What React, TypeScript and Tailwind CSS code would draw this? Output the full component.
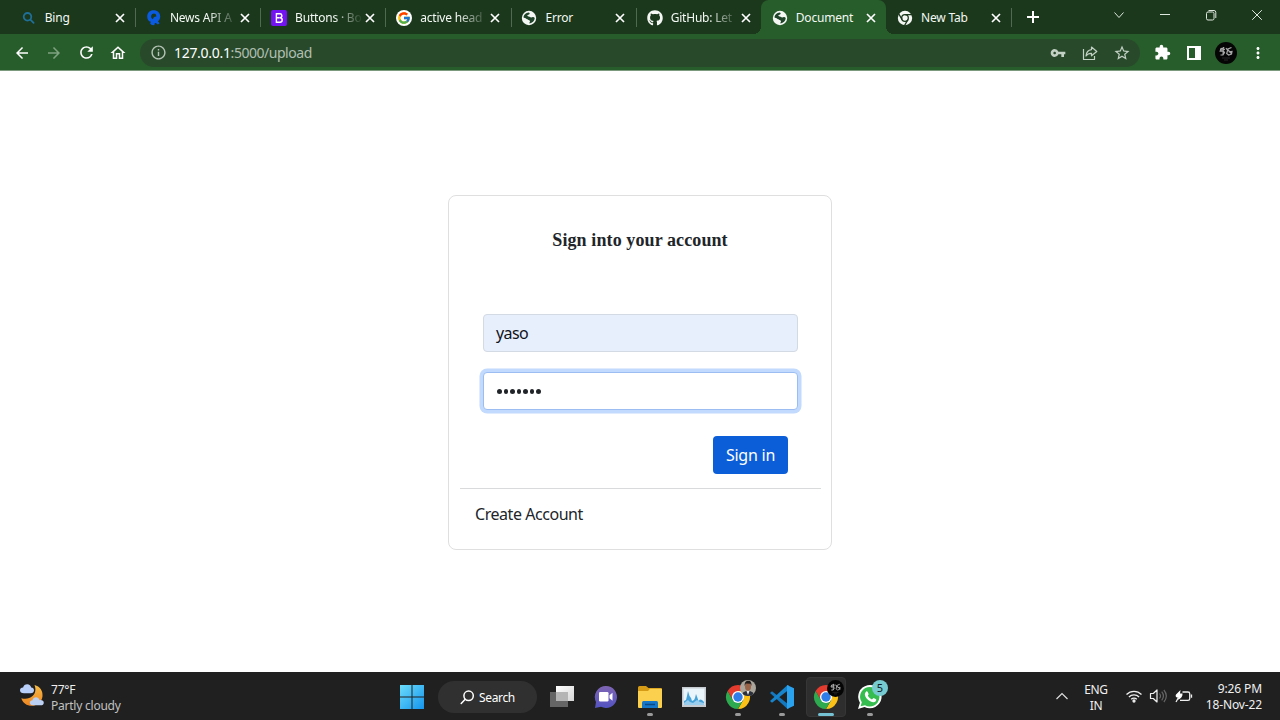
import type { ReactNode } from "react";
import {
  MdArrowBack,
  MdArrowForward,
  MdRefresh,
  MdOutlineHome,
  MdInfoOutline,
  MdVpnKey,
  MdStarBorder,
  MdExtension,
  MdMoreVert,
} from "react-icons/md";
import { FcGoogle } from "react-icons/fc";
import { FaGithub } from "react-icons/fa";
import clsx from "clsx";

function GlobeIcon() {
  return (
    <svg width="16" height="16" viewBox="0 0 16 16">
      <circle cx="8" cy="8" r="7.2" fill="#f4f7f4" />
      <path
        d="M7.600 2.400c1 .2 1.300.8.9 1.500-.5.7-1.700.6-2.100 1.400-.3.8.6 1.300 1.500 1.300 1 0 1.200.9 2.100 1 .9.1 1.300-.7 2.200-.5.9.1 1.600.7 1.500 1.500-.3 2.500-2.400 4.500-5 4.900-.5-.4-.2-1.300.2-1.800.4-.7-.3-1.500-1.200-1.700-1-.3-.8-1.400-1.700-1.600C4.600 8.200 3 7.600 2.500 7.400 2.700 4.700 5 2.500 7.600 2.400Z"
        fill="#21452a"
      />
      <path d="M4 5.300l3 1.500 2.800 1.200-1 1.600-2.800-.4L3.400 7z" fill="#21452a" />
    </svg>
  );
}

function BingSearchIcon() {
  return (
    <svg width="14" height="14" viewBox="0 0 14 14" fill="none" stroke="#1f6f98" strokeWidth="1.800" strokeLinecap="round">
      <circle cx="5.500" cy="5.800" r="3.800" />
      <path d="M8.400 8.600l3.200 3.300" />
    </svg>
  );
}

function NewsIcon() {
  return (
    <svg width="16" height="18" viewBox="0 0 16 18">
      <path
        d="M7.500 1.200c4 0 6.700 2.700 6.700 6.300 0 2.100-.8 3.700-2.300 4.800l1.700 2-1.700 1.100-2-1.500-1 .1-.6 2.300-2.500-.2-1.700-1.600.7-1.700C2.500 12.300 1.200 10.200 1.200 7.500c0-3.600 2.600-6.300 6.300-6.300z"
        fill="#0b5be0"
      />
      <path d="M7.800 4.600a2.900 2.900 0 0 0-.9 5.600c.4-1.700 1.200-2.700 3.400-2.800a2.700 2.700 0 0 0-2.500-2.800z" fill="#1b381c" />
    </svg>
  );
}

function BootstrapIcon() {
  return (
    <svg width="16" height="16" viewBox="0 0 16 16">
      <rect width="16" height="16" rx="2" fill="#7413f2" />
      <path
        d="M5.400 3.700h3.200a2 2 0 0 1 .5 4 2.250 2.250 0 0 1-.3 4.500H5.400zM5.600 7.700h3.200"
        fill="none"
        stroke="#fff"
        strokeWidth="1.400"
      />
    </svg>
  );
}

function MonoChromeIcon() {
  return (
    <svg width="16" height="16" viewBox="0 0 16 16">
      <circle cx="8" cy="8" r="7.200" fill="#f4f7f4" />
      <g fill="none" stroke="#1b381c" strokeWidth="1.300">
        <circle cx="8" cy="8" r="3.300" />
        <path d="M8 4.700h7M5.100 9.650L1.700 3.700M10.900 9.650l-3.500 6.100" />
      </g>
    </svg>
  );
}

function TabGoogleIcon() {
  return (
    <span className="flex size-4 items-center justify-center rounded-full bg-white">
      <FcGoogle size={14} />
    </span>
  );
}

type TabProps = { title: string; icon: ReactNode; active?: boolean; divider?: boolean };

function Tab({ title, icon, active, divider }: TabProps) {
  return (
    <div
      className={clsx(
        "relative flex h-[34px] w-[125.200px] shrink-0 items-center pt-px pl-[10.800px]",
        active && "rounded-t-lg bg-[#275d2b]",
      )}
    >
      {active && (
        <>
          <span className="absolute bottom-0 -left-2 size-2 bg-[radial-gradient(circle_at_0_0,transparent_8px,#275d2b_8px)]" />
          <span className="absolute -right-2 bottom-0 size-2 bg-[radial-gradient(circle_at_100%_0,transparent_8px,#275d2b_8px)]" />
        </>
      )}
      <span className="flex w-4 shrink-0 justify-center">{icon}</span>
      <span
        className={clsx(
          "ml-2 w-[66px] pt-px text-[12px] leading-4 tracking-[-0.200px] whitespace-nowrap text-[#f4f8f4]",
          title.length > 8 && "[mask-image:linear-gradient(to_right,black_38px,transparent_68px)]",
        )}
      >
        {title}
      </span>
      <svg
        width="10"
        height="10"
        viewBox="0 0 10 10"
        className="ml-[4px] shrink-0"
        fill="none"
        stroke="#fff"
        strokeWidth="1.700"
      >
        <path d="M1 1l8 8M9 1L1 9" />
      </svg>
      {divider && <span className="absolute top-2 right-[-1px] h-[19px] w-px bg-[#4f6a50]" />}
    </div>
  );
}

function TabStrip() {
  return (
    <div className="flex h-[34px] bg-[#1b381c] pl-[9.900px]">
      <Tab title="Bing" icon={<BingSearchIcon />} divider />
      <Tab title="News API A" icon={<NewsIcon />} divider />
      <Tab title="Buttons · Bo" icon={<BootstrapIcon />} divider />
      <Tab title="active head" icon={<TabGoogleIcon />} divider />
      <Tab title="Error" icon={<GlobeIcon />} divider />
      <Tab title="GitHub: Let" icon={<FaGithub size={16} color="#f4f7f4" />} />
      <Tab title="Document" icon={<GlobeIcon />} active />
      <Tab title="New Tab" icon={<MonoChromeIcon />} divider />
      <div className="flex w-[43px] items-center justify-center">
        <svg width="12" height="12" viewBox="0 0 12 12" stroke="#fff" strokeWidth="2">
          <path d="M0 6h12M6 0v12" />
        </svg>
      </div>
      <div className="ml-auto flex h-[30px] text-[#dfe8df]">
        <WindowButton>
          <path d="M1.500 3.500l4.500 5 4.500-5" />
        </WindowButton>
        <WindowButton>
          <path d="M1 5.500h10" />
        </WindowButton>
        <WindowButton>
          <rect x="1.500" y="3" width="7.500" height="8" rx="1.500" />
          <path d="M3.500 1.500H9a1.800 1.800 0 0 1 1.800 1.800V9" />
        </WindowButton>
        <WindowButton>
          <path d="M1.200 1.200l9.600 9.600M10.800 1.200l-9.600 9.600" />
        </WindowButton>
      </div>
    </div>
  );
}

function WindowButton({ children }: { children: ReactNode }) {
  return (
    <span className="flex w-[46px] items-center justify-center">
      <svg width="12" height="12" viewBox="0 0 12 12" fill="none" stroke="currentColor" strokeWidth="1">
        {children}
      </svg>
    </span>
  );
}

function Slot({ children }: { children: ReactNode }) {
  return <span className="flex h-full w-8 shrink-0 items-center justify-center">{children}</span>;
}

function ProfileMark({ className }: { className: string }) {
  return (
    <svg viewBox="0 0 22 22" className={className}>
      <circle cx="11" cy="11" r="11" fill="#050505" />
      <g fill="none" stroke="#a8a8a8" strokeWidth="1.200">
        <path d="M9.500 6L6 6.500l-.8 2.700 3.300-.2 1 1.500-1.500 2.500-2.500 0M8.500 5l-.5 8M5 8l5-.5" />
        <path d="M16.500 5.500l-3.500 1.500-1.300 4.500 2 1.500 2.800-1 .5-2.500-3.300.3M12 7l5 5M11 6l2 3" />
      </g>
      <path d="M7 16h8M9 18h4" stroke="#333" strokeWidth=".8" />
    </svg>
  );
}

function Toolbar() {
  return (
    <div className="flex h-[37px] items-center border-b border-[#7c9b7e] bg-[#275d2b] px-[6px] pt-px text-white">
      <Slot><MdArrowBack size={18} /></Slot>
      <Slot><MdArrowForward size={18} className="text-[#7fa381]" /></Slot>
      <Slot><MdRefresh size={19} /></Slot>
      <Slot><MdOutlineHome size={18} /></Slot>
      <div className="ml-[6px] flex h-7 w-[1000px] items-center rounded-full bg-[#284a2b] pr-[2px] pl-[10px]">
        <MdInfoOutline size={17} className="text-[#b5c4b6]" />
        <span className="ml-[7px] text-[14px] leading-5 tracking-[-0.470px] text-[#b0bfb1]">
          <span className="tracking-[-0.300px] text-white">127.0.0.1</span>:5000/upload
        </span>
        <div className="ml-auto flex h-full text-[#c3d0c4]">
          <Slot><MdVpnKey size={16} /></Slot>
          <Slot>
            <svg width="16" height="16" viewBox="0 0 16 16" fill="none" stroke="currentColor" strokeWidth="1.200" strokeLinejoin="round">
              <path d="M1.500 4v10.500h11V11" />
              <path d="M9.500 2l5.300 4.500-5.300 4.300V8.300C7 8.200 5.300 9 4 11c.3-3.600 2.200-6 5.500-6.400z" />
            </svg>
          </Slot>
          <Slot><MdStarBorder size={18} /></Slot>
        </div>
      </div>
      <div className="ml-[6px] flex h-full">
        <Slot><MdExtension size={17} /></Slot>
        <Slot>
          <svg width="14" height="14" viewBox="0 0 14 14">
            <path d="M1 1h12v12H1z" fill="none" stroke="#fff" strokeWidth="2" />
            <path d="M8 1h5v12H8z" fill="#fff" />
          </svg>
        </Slot>
        <Slot><ProfileMark className="size-[22px] shrink-0" /></Slot>
        <Slot><MdMoreVert size={18} /></Slot>
      </div>
    </div>
  );
}

function SignInCard() {
  return (
    <form className="flex h-[355px] w-96 flex-col rounded-lg border border-[#dfdfdf] bg-white pr-[10px] pl-[11px] text-[16px] text-[#212529]">
      <h1 className="mt-[32px] pr-px text-center font-['Liberation_Serif',serif] text-[18px] leading-6 font-bold tracking-[0.100px]">
        Sign into your account
      </h1>
      <div className="mt-[62px] flex flex-col gap-5 px-[23px]">
        <div className="flex h-[38px] items-center rounded border border-[#d3dae3] bg-[#e8effc] px-3 pt-px text-[#10131a]">
          <span className="tracking-[-0.600px]">yaso</span>
        </div>
        <div className="flex h-[38px] items-center gap-[2px] rounded border border-[#9bbdf2] bg-white px-[13px] ring-[3.500px] ring-[#c2dafd]">
          {Array.from({ length: 7 }, (_, i) => (
            <span key={i} className="mt-[2px] size-[4.500px] shrink-0 rounded-full bg-[#212529]" />
          ))}
        </div>
      </div>
      <span className="mt-[26px] mr-[33px] flex h-[38px] w-[75px] items-center justify-center self-end rounded bg-[#0b5ed7] pt-px tracking-[-0.250px] text-white">
        Sign in
      </span>
      <hr className="mt-[14px] border-[#d9dadb]" />
      <span className="mt-[13px] ml-[15px] tracking-[-0.450px]">Create Account</span>
    </form>
  );
}

function ChromeIcon() {
  return (
    <svg width="26" height="26" viewBox="0 0 26 26">
      <path d="M23.400 7H13l5.200 9L13 25A12 12 0 0 0 23.400 7z" fill="#fbc116" />
      <path d="M2.600 7A12 12 0 0 1 23.400 7H13l-5.200 9z" fill="#e33b2e" />
      <path d="M2.600 7l5.200 9 5.200 3 5.200-3L13 25A12 12 0 0 1 2.600 7z" fill="#2da94f" />
      <circle cx="13" cy="13" r="6" fill="#fff" />
      <circle cx="13" cy="13" r="4.700" fill="#2f7de9" />
    </svg>
  );
}

function VsCodeIcon() {
  return (
    <svg width="26" height="26" viewBox="0 0 26 26">
      <path d="M1 9l2-1.800 16.500 13.300V25L18 24.500z" fill="#1478be" />
      <path d="M1 17l2 1.800L19.500 6V1L18 1.500z" fill="#1685cd" />
      <path d="M18 1l7 3.200v17.600L18 25z" fill="#2ba2ed" />
    </svg>
  );
}

function WhatsAppIcon() {
  return (
    <svg width="26" height="26" viewBox="0 0 26 26">
      <path d="M1 25l1.900-6.300A11.700 11.700 0 1 1 7.500 23z" fill="#fff" />
      <path d="M3.600 22.300l1.200-4A9.700 9.700 0 1 1 8 21.200z" fill="#35bd4f" />
      <path
        d="M9.200 7.500c.5-.4 1.100-.3 1.400.3l1 2.200c.2.500-.8 1.400-.7 1.700 1 1.900 2.300 3 4.100 3.700.5 0 1.200-1.500 1.700-1.300l2.300 1.200c.5.300.1 1.400-.3 1.900-1.100 1.300-3 1.200-5.500 0-2.800-1.400-4.900-4-5.300-6.200-.2-1.400.5-2.800 1.300-3.500z"
        fill="#fff"
      />
    </svg>
  );
}

type TaskProps = { children: ReactNode; running?: boolean; active?: boolean };

function TaskItem({ children, running, active }: TaskProps) {
  return (
    <span className="flex h-12 w-11 shrink-0 items-center justify-center pt-px">
      <span
        className={clsx(
          "relative flex size-10 items-center justify-center rounded",
          active && "border border-[#363636] bg-[#2e2e2e]",
        )}
      >
        {children}
        {running && <span className="absolute bottom-[1px] h-[3px] w-[6px] rounded-full bg-[#9a9a9a]" />}
        {active && <span className="absolute bottom-0 h-[3px] w-4 rounded-full bg-[#76c2d5]" />}
      </span>
    </span>
  );
}

function Taskbar() {
  return (
    <div className="flex h-12 items-center bg-[#202020] text-[12px] leading-4 text-[#f0f0f0]">
      <div className="flex w-[390px] items-center pt-[3px] pl-[19px]">
        <svg width="26" height="26" viewBox="0 0 26 26" className="-mt-1">
          <defs>
            <linearGradient id="moon" x1="0" y1="0" x2="0" y2="1">
              <stop stopColor="#f7bd47" />
              <stop offset="1" stopColor="#ed8420" />
            </linearGradient>
          </defs>
          <path d="M15.500 2c5.500 1.500 8.500 5.700 8 11.200-.6 5.600-5 9.500-10.600 9.600-5.300 0-9-3-10.600-7.600 4 1.200 8.200.6 11.200-2.100 3.200-2.900 3.600-7 2-11.100z" fill="url(#moon)" />
          <path d="M5 10.300c-2.600 0-4-1.300-4-3s1.400-2.800 3.100-2.700C4.500 2.500 6.200 1.300 8.200 1.300c2.200 0 3.600 1.400 4 3.200 1.700.1 2.800 1.100 2.800 2.700 0 1.800-1.300 3.100-3.300 3.100z" fill="#b9d0fa" />
          <path d="M14 22.300c-2 0-3.200-1.100-3.200-2.600 0-1.600 1.100-2.500 2.600-2.500.5-2 1.900-3 3.600-3s3.100 1 3.600 3c2.300-.4 4.200.7 4.200 2.500 0 1.600-1.200 2.600-3.200 2.600z" fill="#bcd0f3" />
        </svg>
        <div className="ml-[6px] flex flex-col tracking-[-0.230px]">
          <span>77°F</span>
          <span className="text-[#c2c2c2]">Partly cloudy</span>
        </div>
      </div>

      <TaskItem>
        <svg width="24" height="24" viewBox="0 0 24 24">
          <defs>
            <linearGradient id="start" x1="0" y1="0" x2="1" y2="1">
              <stop stopColor="#6bdcfa" />
              <stop offset="1" stopColor="#1594ed" />
            </linearGradient>
          </defs>
          <path d="M0 0h11.500v11.500H0zM12.500 0H24v11.500H12.500zM0 12.500h11.500V24H0zM12.500 12.500H24V24H12.500z" fill="url(#start)" />
        </svg>
      </TaskItem>
      <div className="mt-[2px] ml-1 flex h-8 w-[99px] shrink-0 items-center rounded-full bg-[#303030] pl-[22px]">
        <svg width="15" height="15" viewBox="0 0 15 15" fill="none" stroke="#fff" strokeWidth="1.500" strokeLinecap="round">
          <circle cx="8.600" cy="5.800" r="4.700" />
          <path d="M5.200 9.200L1.200 13.500" />
        </svg>
        <span className="ml-[4px] pt-px tracking-[-0.350px] text-white">Search</span>
      </div>
      <div className="ml-[3px] flex">
        <TaskItem>
          <svg width="24" height="24" viewBox="0 0 24 24">
            <defs>
              <linearGradient id="view" x1="0" y1="0" x2="1" y2="1">
                <stop stopColor="#fff" />
                <stop offset="1" stopColor="#d5d5d5" />
              </linearGradient>
            </defs>
            <path d="M6 1h18v15H6z" fill="url(#view)" />
            <path d="M0 7h18v15H0z" fill="#777" fillOpacity=".8" />
            <path d="M6 7h12v9H6z" fill="#b5b5b5" />
          </svg>
        </TaskItem>
        <TaskItem>
          <svg width="24" height="24" viewBox="0 0 24 24">
            <defs>
              <linearGradient id="chat" x1="0" y1="0" x2="0" y2="1">
                <stop stopColor="#7f65b3" />
                <stop offset="1" stopColor="#5353c2" />
              </linearGradient>
            </defs>
            <path d="M12 1a11 11 0 1 1-5 20.800L1 23l1-6A11 11 0 0 1 12 1z" fill="url(#chat)" />
            <rect x="5" y="7" width="9.500" height="9.500" rx="1.200" fill="#fff" />
            <path d="M15.500 10.200L18.500 7.700v8l-3-2.500z" fill="#fff" />
          </svg>
        </TaskItem>
        <TaskItem running>
          <svg width="26" height="24" viewBox="0 0 26 24">
            <path d="M1 2.500A1.500 1.500 0 0 1 2.500 1H9l2.500 2H24a1 1 0 0 1 1 1v6H1z" fill="#d59a16" />
            <path d="M1 6h10l2-2.200h11A1 1 0 0 1 25 5v17a1 1 0 0 1-1 1H2a1 1 0 0 1-1-1z" fill="#fbd04f" />
            <path d="M5 23v-5.500A1.500 1.500 0 0 1 6.500 16h13a1.500 1.500 0 0 1 1.500 1.500V23z" fill="#1677c9" />
            <path d="M8 19.500h10" stroke="#0c4a83" strokeWidth="1.500" />
          </svg>
        </TaskItem>
        <TaskItem>
          <svg width="24" height="20" viewBox="0 0 24 20">
            <path d="M0 0h24v20H0z" fill="#c5cbd0" />
            <path d="M1.500 1.500h21v16.500h-21z" fill="#e9f4fb" />
            <path d="M2 18v-4l2-1 1-4 1-5 1.500 5 1.500 2 1 3 2-1 1-2 1-4 1.500 4 1 3 1.500-1.500L20 13l2 2v3z" fill="#45a2d9" />
            <path d="M2 18v-2l4-3 2 2 3 1 4-3 3 2 4 1v2z" fill="#9accec" />
          </svg>
        </TaskItem>
        <TaskItem running>
          <ChromeIcon />
          <svg width="16" height="16" viewBox="0 0 16 16" className="absolute top-[3px] right-[2px]">
            <defs>
              <clipPath id="photo">
                <circle cx="8" cy="8" r="8" />
              </clipPath>
            </defs>
            <g clipPath="url(#photo)">
              <path d="M0 0h16v16H0z" fill="#aaa69c" />
              <path d="M2 16l1-3.500 3-1.500h4l3 1.500 1.500 3.500z" fill="#2c303a" />
              <path d="M6.500 11h3L8 15z" fill="#e8e8e8" />
              <ellipse cx="8" cy="6.500" rx="3" ry="4.300" fill="#996347" />
              <path d="M4.700 6C4.300 2.500 6 .8 8.300.8S12 2.800 11.300 6l-.8-2.200-4.700-.3z" fill="#211b19" />
            </g>
          </svg>
        </TaskItem>
        <TaskItem running>
          <VsCodeIcon />
        </TaskItem>
        <TaskItem active>
          <ChromeIcon />
          <ProfileMark className="absolute top-[2px] right-[1px] size-[17px]" />
        </TaskItem>
        <TaskItem running>
          <WhatsAppIcon />
          <span className="absolute top-[3px] right-[2px] flex size-4 items-center justify-center rounded-full bg-[#76cbd1] text-[11px] text-[#102022]">
            5
          </span>
        </TaskItem>
      </div>

      <div className="ml-auto flex h-full items-center pr-[18px]">
        <svg width="12" height="8" viewBox="0 0 12 8" fill="none" stroke="#ddd" strokeWidth="1.200">
          <path d="M.5 7L6 1.500 11.500 7" />
        </svg>
        <div className="ml-[16px] w-6 pt-[3px] text-center tracking-[-0.350px]">
          ENG
          <br />
          IN
        </div>
        <svg width="18" height="16" viewBox="0 0 18 16" fill="none" stroke="#eee" strokeWidth="1.300" className="ml-[17px]">
          <path d="M1.500 6.500c4.300-4.300 10.700-4.300 15 0M3.900 9c2.900-2.900 7.300-2.900 10.200 0M6.200 11.300c1.600-1.600 4-1.600 5.600 0" />
          <circle cx="9" cy="13" r="1" fill="#eee" />
        </svg>
        <svg width="18" height="16" viewBox="0 0 18 16" fill="none" stroke="#eee" strokeWidth="1.200" strokeLinejoin="round" className="ml-[6px]">
          <path d="M1.500 5.500h2.800L8 2v12l-3.700-3.500H1.500z" />
          <path d="M10.500 5.500c1.200 1.500 1.200 3.500 0 5M12.700 3.700c2.100 2.600 2.100 6 0 8.600M14.900 2c3 3.700 3 8.300 0 12" stroke="#666" />
        </svg>
        <svg width="19" height="16" viewBox="0 0 19 16" fill="none" stroke="#eee" strokeWidth="1.300" className="ml-[7px]">
          <path d="M8.500 4H14a1.700 1.700 0 0 1 1.700 1.700v5A1.700 1.700 0 0 1 14 12.400H6M17.500 6.500v3.200" />
          <path d="M3 11.500l1.500-1.700C2 9.500 1 8.200 2 6.500L6.500 2 6 5.500h2.500c.3 3-1.500 5-4 6z" fill="#fff" stroke="none" />
          <path d="M4.500 9.500L2 14" />
        </svg>
        <div className="ml-[11px] w-[58px] pt-px text-right tracking-[-0.120px] whitespace-nowrap">
          9:26 PM
          <br />
          18-Nov-22
        </div>
      </div>
    </div>
  );
}

export default function App() {
  return (
    <div className="flex h-[720px] w-[1280px] flex-col overflow-hidden bg-white font-['Noto_Sans','Open_Sans',sans-serif]">
      <TabStrip />
      <Toolbar />
      <main className="flex flex-1 items-center justify-center pt-px">
        <SignInCard />
      </main>
      <Taskbar />
    </div>
  );
}
